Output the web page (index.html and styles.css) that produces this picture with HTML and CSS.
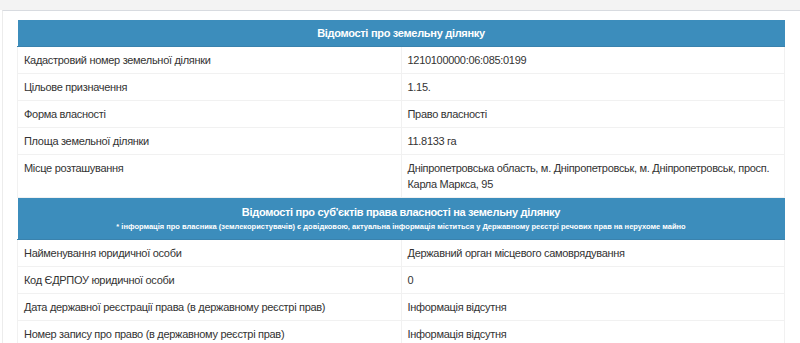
FILE: index.html
```html
<!DOCTYPE html>
<html lang="uk">
<head>
<meta charset="utf-8">
<title>Відомості про земельну ділянку</title>
<link rel="stylesheet" href="styles.css">
</head>
<body>
<div class="topbar"></div>
<div class="box">
  <table class="info">
    <tr class="head"><th colspan="2">Відомості про земельну ділянку</th></tr>
    <tr><td>Кадастровий номер земельної ділянки</td><td>1210100000:06:085:0199</td></tr>
    <tr><td>Цільове призначення</td><td>1.15.</td></tr>
    <tr><td>Форма власності</td><td>Право власності</td></tr>
    <tr><td>Площа земельної ділянки</td><td>11.8133 га</td></tr>
    <tr><td>Місце розташування</td><td>Дніпропетровська область, м. Дніпропетровськ, м. Дніпропетровськ, просп. Карла Маркса, 95</td></tr>
    <tr class="head head2"><th colspan="2">Відомості про суб'єктів права власності на земельну ділянку<div class="note">* інформація про власника (землекористувачів) є довідковою, актуальна інформація міститься у Державному реєстрі речових прав на нерухоме майно</div></th></tr>
    <tr><td>Найменування юридичної особи</td><td>Державний орган місцевого самоврядування</td></tr>
    <tr><td>Код ЄДРПОУ юридичної особи</td><td>0</td></tr>
    <tr><td>Дата державної реєстрації права (в державному реєстрі прав)</td><td>Інформація відсутня</td></tr>
    <tr><td>Номер запису про право (в державному реєстрі прав)</td><td>Інформація відсутня</td></tr>
  </table>
</div>
</body>
</html>
```
FILE: styles.css
```css
html, body {
  margin: 0;
  padding: 0;
  background: #ffffff;
  font-family: "Liberation Sans", Arial, sans-serif;
  color: #333333;
  overflow: hidden;
}
.topbar {
  height: 10px;
  background: #f3f3f3;
}
.box {
  margin-left: 2px;
  width: 783px;
  border-top: 1px solid #d8dbe0;
  border-left: 1px solid #ececec;
  border-right: 1px solid #f2f2f2;
  padding: 9px 0 0 14px;
  background: #ffffff;
  height: 400px;
}
.info {
  width: 768px;
  border-collapse: collapse;
  table-layout: fixed;
  font-size: 11px;
  letter-spacing: -0.3px;
  line-height: 16px;
}
.info td {
  width: 50%;
  padding: 5px 6px;
  border: 1px solid #f1f1f1;
  vertical-align: top;
  text-align: left;
}
.head th {
  background: #3c8dbc;
  color: #ffffff;
  font-weight: bold;
  font-size: 11px;
  letter-spacing: -0.3px;
  line-height: 15px;
  padding: 6px 6px 5px;
  text-align: center;
  border-bottom: 1px solid #3a82ad;
}
.head2 th {
  padding: 6px 6px 6px;
  line-height: 16px;
}
.note {
  font-size: 7.5px;
  letter-spacing: 0;
  line-height: 13px;
  font-weight: bold;
}
```
